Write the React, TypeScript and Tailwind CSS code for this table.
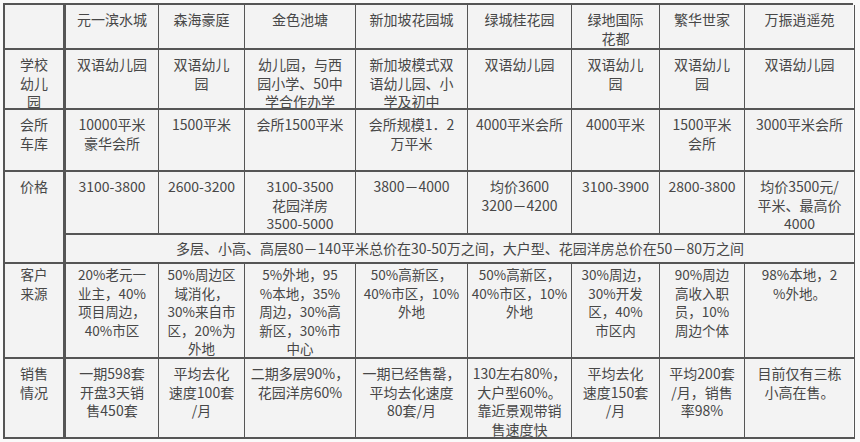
const headers: string[][] = [
  ['元一滨水城'],
  ['森海豪庭'],
  ['金色池塘'],
  ['新加坡花园城'],
  ['绿城桂花园'],
  ['绿地国际', '花都'],
  ['繁华世家'],
  ['万振逍遥苑'],
];

const school: string[][] = [
  ['双语幼儿园'],
  ['双语幼儿', '园'],
  ['幼儿园，与西', '园小学、50中', '学合作办学'],
  ['新加坡模式双', '语幼儿园、小', '学及初中'],
  ['双语幼儿园'],
  ['双语幼儿', '园'],
  ['双语幼儿', '园'],
  ['双语幼儿园'],
];

const club: string[][] = [
  ['10000平米', '豪华会所'],
  ['1500平米'],
  ['会所1500平米'],
  ['会所规模1．2', '万平米'],
  ['4000平米会所'],
  ['4000平米'],
  ['1500平米', '会所'],
  ['3000平米会所'],
];

const price: string[][] = [
  ['3100-3800'],
  ['2600-3200'],
  ['3100-3500', '花园洋房', '3500-5000'],
  ['3800－4000'],
  ['均价3600', '3200－4200'],
  ['3100-3900'],
  ['2800-3800'],
  ['均价3500元/', '平米、最高价', '4000'],
];

const clients: string[][] = [
  ['20%老元一', '业主，40%', '项目周边，', '40%市区'],
  ['50%周边区', '域消化，', '30%来自市', '区，20%为', '外地'],
  ['5%外地，95', '%本地，35%', '周边，30%高', '新区，30%市', '中心'],
  ['50%高新区，', '40%市区，10%', '外地'],
  ['50%高新区，', '40%市区，10%', '外地'],
  ['30%周边，', '30%开发', '区，40%', '市区内'],
  ['90%周边', '高收入职', '员，10%', '周边个体'],
  ['98%本地，2', '%外地。'],
];

const sales: string[][] = [
  ['一期598套', '开盘3天销', '售450套'],
  ['平均去化', '速度100套', '/月'],
  ['二期多层90%，', '花园洋房60%'],
  ['一期已经售罄，', '平均去化速度', '80套/月'],
  ['130左右80%，', '大户型60%。', '靠近景观带销', '售速度快'],
  ['平均去化', '速度150套', '/月'],
  ['平均200套', '/月，销售', '率98%'],
  ['目前仅有三栋', '小高在售。'],
];

// one table cell, lines are broken by hand like the printed sheet
const Cell = ({ lines, first, tight }: { lines: string[]; first?: boolean; tight?: boolean }) => (
  <div
    className={`overflow-hidden border-b-2 border-[#555] px-[2px] text-center leading-[18.5px] ${
      first ? 'border-r-[3px]' : 'border-r-[1.5px]'
    } ${tight ? 'pt-[1px] text-[13.5px]' : 'pt-[5px]'}`}
  >
    {lines.map((l, i) => (
      <div key={i} className="whitespace-nowrap">
        {l}
      </div>
    ))}
  </div>
);

const Row = ({ label, cells, tight }: { label: string[]; cells: string[][]; tight?: boolean }) => (
  <>
    <Cell lines={label} first tight={tight} />
    {cells.map((c, i) => (
      <Cell key={i} lines={c} tight={tight} />
    ))}
  </>
);

export default function App() {
  return (
    <div className="w-[860px] h-[442px] bg-[#fafafa] pt-[3px] pl-[3px] font-['Noto_Sans_CJK_SC','Noto_Sans',sans-serif] text-[14px] text-[#474747]">
      <div className="grid w-[850px] grid-cols-[61px_93px_86px_111px_112px_104px_88px_85px_110px] grid-rows-[45px_60px_62px_63px_29px_95px_80px] border-t-2 border-l-2 border-[#555] bg-[#f3f3f3]">
        <Row label={[]} cells={headers} />
        <Row label={['学校', '幼儿', '园']} cells={school} />
        <Row label={['会所', '车库']} cells={club} />

        <div className="row-span-2 border-b-2 border-r-[3px] border-[#555] pt-[5px] text-center leading-[18.5px]">
          价格
        </div>
        {price.map((c, i) => (
          <Cell key={i} lines={c} />
        ))}
        <div className="col-span-8 flex items-center justify-center border-b-2 border-r-[1.5px] border-[#555] whitespace-nowrap">
          多层、小高、高层80－140平米总价在30-50万之间，大户型、花园洋房总价在50－80万之间
        </div>

        <Row label={['客户', '来源']} cells={clients} tight />
        <Row label={['销售', '情况']} cells={sales} />
      </div>
    </div>
  );
}
